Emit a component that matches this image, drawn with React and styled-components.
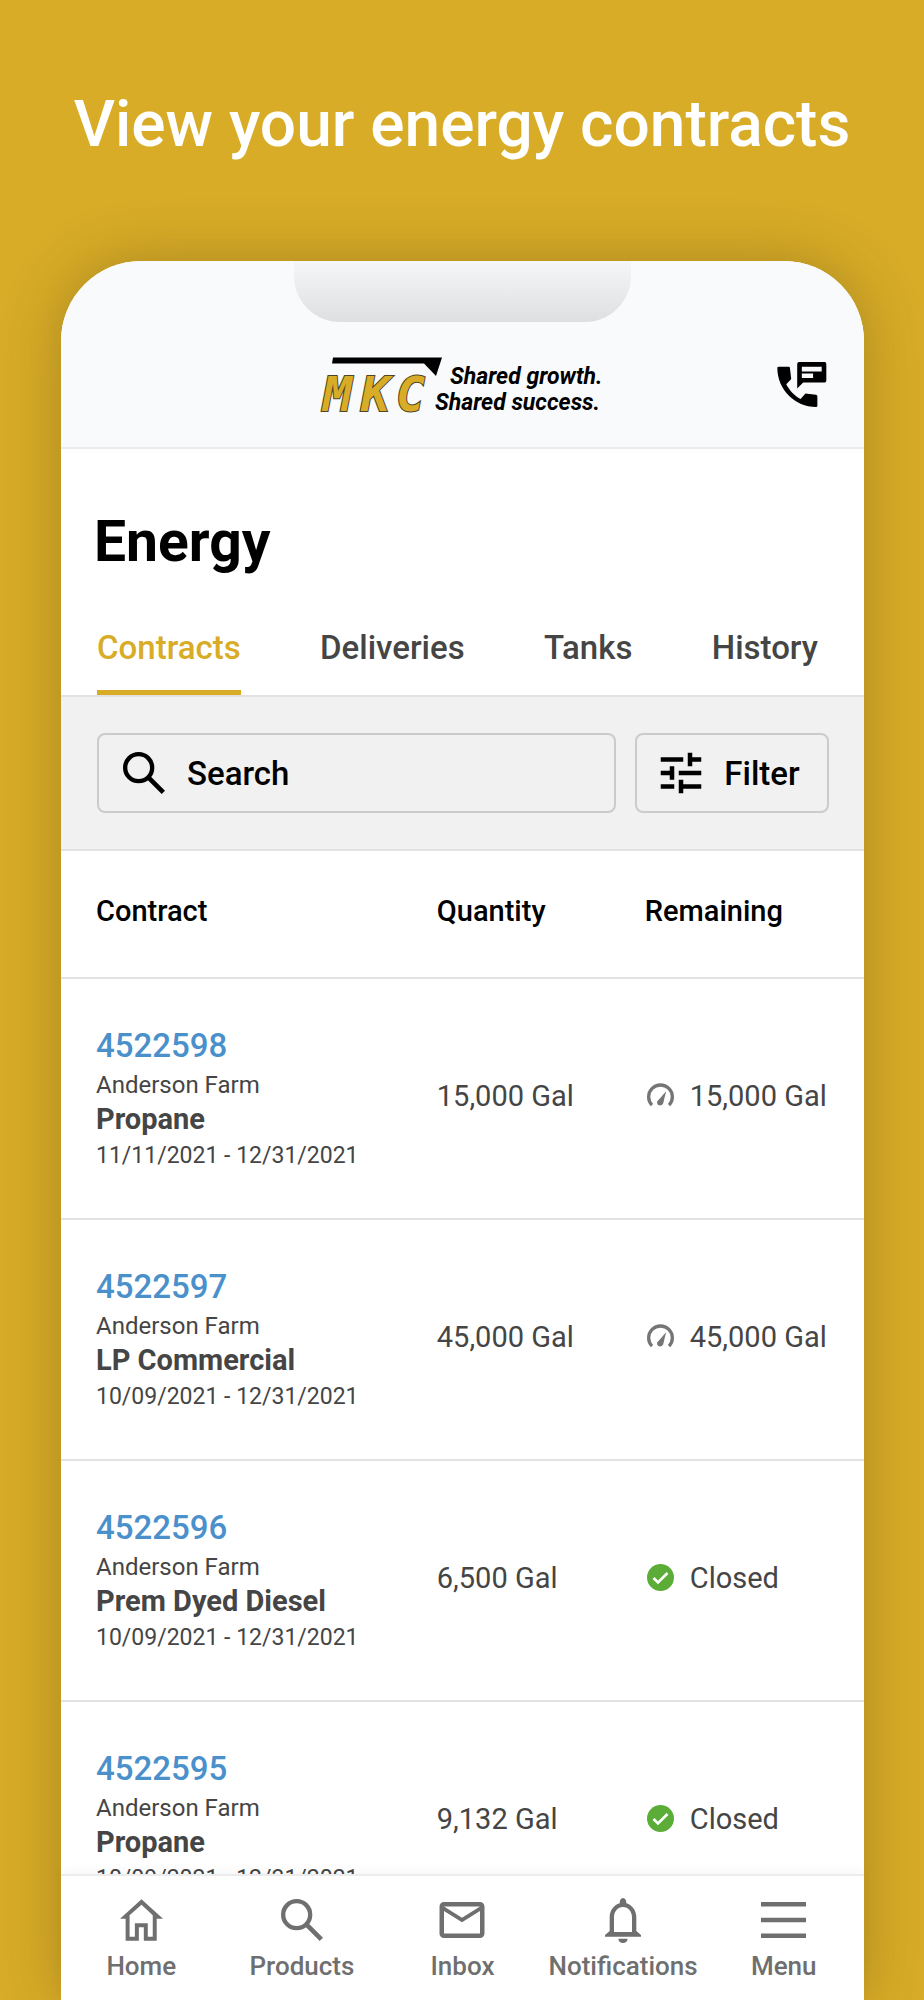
import styled, { createGlobalStyle } from "styled-components";
import { MdMailOutline, MdNotificationsNone, MdTune } from "react-icons/md";

const GlobalStyle = createGlobalStyle`
  * {
    box-sizing: border-box;
  }

  body {
    margin: 0;
    background: #d8ac27;
    font-family: Roboto, "Liberation Sans", sans-serif;
  }

  button,
  input {
    font-family: inherit;
  }
`;

const Page = styled.div`
  display: flex;
  flex-direction: column;
  height: 100vh;
  overflow: hidden;
`;

const Headline = styled.h1`
  margin: 0;
  padding: 85px 0 96px;
  color: #fff;
  font-size: 64px;
  font-weight: 500;
  line-height: 80px;
  text-align: center;
`;

const Phone = styled.div`
  flex: 1;
  min-height: 0;
  margin: 0 60px 0 61px;
  display: flex;
  flex-direction: column;
  background: #fff;
  border-radius: 80px 80px 0 0;
  box-shadow: 0 0 60px rgba(70, 60, 20, 0.32);
`;

const Header = styled.header`
  background: #f9fafc;
  border-bottom: 2px solid #e9ebed;
  border-radius: 80px 80px 0 0;
`;

const Notch = styled.div`
  width: 42%;
  height: 61px;
  margin: 0 auto;
  border-radius: 0 0 46px 46px;
  background: linear-gradient(#f5f6f7, #dedfe1);
`;

const Brand = styled.div`
  display: grid;
  grid-template-columns: 1fr auto 1fr;
  align-items: center;
  height: 125px;
  padding: 0 37px;
`;

const ContactButton = styled.button`
  grid-column: 3;
  justify-self: end;
  display: flex;
  padding: 0;
  border: 0;
  background: none;
`;

const LogoBox = styled.div`
  grid-column: 2;
  display: flex;
`;

const Content = styled.main`
  flex: 1;
  min-height: 0;
  overflow: hidden;
`;

const Title = styled.h2`
  margin: 0;
  padding: 60px 33px 32px;
  color: #000;
  font-size: 57px;
  font-weight: 700;
  line-height: 66px;
`;

const Tabs = styled.div`
  display: flex;
  justify-content: space-between;
  padding: 0 46px 0 36px;
  border-bottom: 2px solid #e2e2e2;
`;

const Tab = styled.button`
  height: 88px;
  padding: 0 0 2px;
  border: 0;
  border-bottom: 5px solid ${({ $active }) => ($active ? "#d8ac27" : "transparent")};
  background: none;
  color: ${({ $active }) => ($active ? "#d8ac27" : "#454545")};
  font-size: 33px;
  font-weight: 500;
  line-height: 40px;
`;

const Tools = styled.div`
  display: flex;
  gap: 19px;
  padding: 36px 35px 36px 36px;
  background: #f1f1f1;
  border-bottom: 2px solid #e2e2e2;
`;

const SearchBox = styled.label`
  flex: 1;
  min-width: 0;
  display: flex;
  align-items: center;
  gap: 22px;
  height: 80px;
  padding: 0 24px;
  border: 2px solid #cbcbcb;
  border-radius: 8px;
`;

const SearchInput = styled.input`
  flex: 1;
  min-width: 0;
  padding: 0;
  border: 0;
  outline: 0;
  background: none;
  color: #000;
  font-size: 33px;
  font-weight: 500;

  &::placeholder {
    color: #000;
    opacity: 1;
  }
`;

const FilterButton = styled.button`
  flex-shrink: 0;
  display: flex;
  align-items: center;
  justify-content: center;
  gap: 16px;
  width: 194px;
  padding: 0 10px 0 0;
  border: 2px solid #cbcbcb;
  border-radius: 8px;
  background: none;
  color: #000;
  font-size: 33px;
  font-weight: 500;
`;

const Table = styled.table`
  width: 100%;
  border-collapse: collapse;
  table-layout: fixed;
  color: #454545;
`;

const HeadCell = styled.th`
  width: ${({ $width }) => $width};
  height: 127px;
  padding: 0 0 6px ${({ $first }) => ($first ? "35px" : 0)};
  border-bottom: 2px solid #e2e2e2;
  color: #000;
  font-size: 29px;
  font-weight: 500;
  text-align: left;
`;

const NameCell = styled.td`
  height: 241px;
  padding: 6px 0 0 35px;
  border-bottom: 2px solid #e2e2e2;
`;

const AmountCell = styled.td`
  padding: 0 0 6px;
  border-bottom: 2px solid #e2e2e2;
  font-size: 29px;
`;

const ContractLink = styled.a`
  display: block;
  color: #4a90cb;
  font-size: 33px;
  font-weight: 500;
  line-height: 40px;
  text-decoration: none;
`;

const Farm = styled.div`
  font-size: 24px;
  line-height: 38px;
`;

const Product = styled.div`
  font-size: 29px;
  font-weight: 700;
  line-height: 30px;
`;

const Dates = styled.div`
  font-size: 23px;
  line-height: 44px;
`;

const Status = styled.div`
  display: flex;
  align-items: center;
  gap: 16px;
  padding-left: 2px;
  white-space: nowrap;
`;

const BottomNav = styled.nav`
  display: grid;
  grid-template-columns: repeat(5, 1fr);
  height: 126px;
  background: #fff;
  border-top: 2px solid #ececec;
  box-shadow: 0 -4px 10px rgba(0, 0, 0, 0.03);
`;

const NavItem = styled.a`
  display: flex;
  flex-direction: column;
  align-items: center;
  padding-top: 16px;
  color: #6f6f6f;
  font-size: 26px;
  font-weight: 500;
  line-height: 32px;
  text-decoration: none;
`;

const NavIcon = styled.span`
  display: flex;
  align-items: center;
  justify-content: center;
  height: 56px;
  margin-bottom: 2px;
`;

const Logo = () => (
  <svg width="288" height="72" viewBox="319 349 288 72" role="img" aria-label="MKC">
    <path d="M333 357.5H442L436 376L424 363.5H332Z" fill="#000" />
    <g
      fontFamily="'DejaVu Sans Mono', monospace"
      fontStyle="italic"
      fontWeight="700"
      fontSize="48"
      fill="#d8ac27"
      stroke="#4d4526"
      strokeWidth="2"
      paintOrder="stroke"
    >
      <text x="323" y="411">M</text>
      <text x="361" y="411">K</text>
      <text x="396" y="411">C</text>
    </g>
    <g fontFamily="Roboto, sans-serif" fontStyle="italic" fontWeight="700" fontSize="23" fill="#000">
      <text x="450" y="384">Shared growth.</text>
      <text x="435" y="410">Shared success.</text>
    </g>
  </svg>
);

const ContactIcon = () => (
  <svg width="50" height="45" viewBox="112 95 149 136" fillRule="evenodd">
    <path d="M116 109H146Q150 109 150 113L154 146L139 162C148 180 164 197 182 207L197 190L229 194Q233 195 233 199V227Q233 231 229 231C165 231 112 178 112 113Q112 109 116 109Z" />
    <path d="M178 95H255Q260 95 260 101V151Q260 157 255 157H190L172 175V101Q172 95 178 95ZM186 109V124H246V109ZM186 130V143H220V130Z" />
  </svg>
);

const SearchIcon = () => (
  <svg width="42" height="42" viewBox="0 0 126 126" fill="none" stroke="currentColor" strokeWidth="13">
    <circle cx="47" cy="47" r="40.5" />
    <path d="M76 76L121 121" strokeWidth="14" />
  </svg>
);

const HomeIcon = () => (
  <svg width="43" height="42" viewBox="180 207 130 126" fill="currentColor" fillRule="evenodd">
    <path d="M245 207L310 266H291V333H252V292H237V333H197V266H180ZM245 224L209 256V321H225V280H264V321H279V256Z" />
  </svg>
);

const BellIcon = () => (
  <svg width="36" height="45" viewBox="376 205 108 135" fill="currentColor">
    <path
      fillRule="evenodd"
      d="M430 205Q440 206 440 221C458 226 470 243 470 263V304L484 316V321H376V316L390 304V263C390 243 402 226 420 221Q420 206 430 205ZM430 232C414 232 403 245 403 263V307H457V263C457 245 446 232 430 232Z"
    />
    <path d="M416 327H444Q442 340 430 340Q418 340 416 327Z" />
  </svg>
);

const MenuIcon = () => (
  <svg width="45" height="36" viewBox="0 0 20 16" fill="currentColor">
    <path d="M0 0H20V2H0ZM0 7H20V9H0ZM0 14H20V16H0Z" />
  </svg>
);

const GaugeIcon = () => (
  <svg width="27" height="27" viewBox="680 127 82 82">
    <path d="M695 197A36 36 0 1 1 747 197" fill="none" stroke="#757575" strokeWidth="10" />
    <path d="M738 155L729 192Q726 198 719 198Q709 196 711 186Z" fill="#757575" />
  </svg>
);

const ClosedIcon = () => (
  <svg width="27" height="27" viewBox="0 0 27 27">
    <circle cx="13.5" cy="13.5" r="13.5" fill="#5bad38" />
    <path d="M6.5 14L11 18.5L20.5 9" fill="none" stroke="#fff" strokeWidth="2.6" />
  </svg>
);

const tabs = ["Contracts", "Deliveries", "Tanks", "History"];

const contracts = [
  { id: "4522598", product: "Propane", dates: "11/11/2021 - 12/31/2021", quantity: "15,000 Gal", remaining: "15,000 Gal" },
  { id: "4522597", product: "LP Commercial", dates: "10/09/2021 - 12/31/2021", quantity: "45,000 Gal", remaining: "45,000 Gal" },
  { id: "4522596", product: "Prem Dyed Diesel", dates: "10/09/2021 - 12/31/2021", quantity: "6,500 Gal" },
  { id: "4522595", product: "Propane", dates: "10/09/2021 - 12/31/2021", quantity: "9,132 Gal" },
];

const navItems = [
  { label: "Home", icon: <HomeIcon /> },
  { label: "Products", icon: <SearchIcon /> },
  { label: "Inbox", icon: <MdMailOutline size={54} /> },
  { label: "Notifications", icon: <BellIcon /> },
  { label: "Menu", icon: <MenuIcon /> },
];

const App = () => {
  return (
    <Page>
      <GlobalStyle />
      <Headline>View your energy contracts</Headline>
      <Phone>
        <Header>
          <Notch />
          <Brand>
            <LogoBox>
              <Logo />
            </LogoBox>
            <ContactButton aria-label="Contact us">
              <ContactIcon />
            </ContactButton>
          </Brand>
        </Header>
        <Content>
          <Title>Energy</Title>
          <Tabs role="tablist">
            {tabs.map((tab, i) => (
              <Tab key={tab} role="tab" aria-selected={i === 0} $active={i === 0}>
                {tab}
              </Tab>
            ))}
          </Tabs>
          <Tools>
            <SearchBox>
              <SearchIcon />
              <SearchInput type="text" placeholder="Search" aria-label="Search" />
            </SearchBox>
            <FilterButton>
              <MdTune size={54} />
              Filter
            </FilterButton>
          </Tools>
          <Table>
            <thead>
              <tr>
                <HeadCell $first $width="46.8%">Contract</HeadCell>
                <HeadCell $width="25.9%">Quantity</HeadCell>
                <HeadCell>Remaining</HeadCell>
              </tr>
            </thead>
            <tbody>
              {contracts.map((contract) => (
                <tr key={contract.id}>
                  <NameCell>
                    <ContractLink href="#">{contract.id}</ContractLink>
                    <Farm>Anderson Farm</Farm>
                    <Product>{contract.product}</Product>
                    <Dates>{contract.dates}</Dates>
                  </NameCell>
                  <AmountCell>{contract.quantity}</AmountCell>
                  <AmountCell>
                    <Status>
                      {contract.remaining ? <GaugeIcon /> : <ClosedIcon />}
                      {contract.remaining || "Closed"}
                    </Status>
                  </AmountCell>
                </tr>
              ))}
            </tbody>
          </Table>
        </Content>
        <BottomNav>
          {navItems.map((item) => (
            <NavItem key={item.label} href="#">
              <NavIcon>{item.icon}</NavIcon>
              {item.label}
            </NavItem>
          ))}
        </BottomNav>
      </Phone>
    </Page>
  );
};

export default App;
